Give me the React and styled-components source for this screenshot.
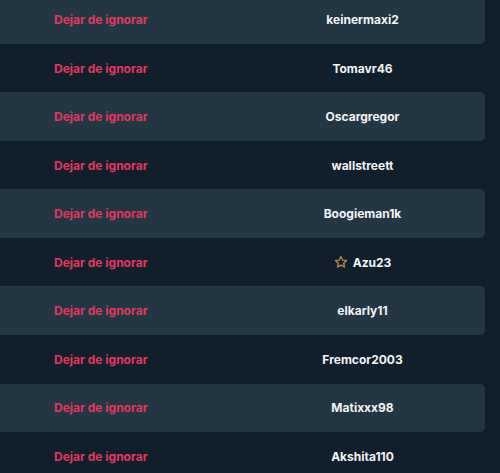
import styled, { createGlobalStyle } from 'styled-components';

const users = [
  { name: 'keinermaxi2' },
  { name: 'Tomavr46' },
  { name: 'Oscargregor' },
  { name: 'wallstreett' },
  { name: 'Boogieman1k' },
  { name: 'Azu23', star: true },
  { name: 'elkarly11' },
  { name: 'Fremcor2003' },
  { name: 'Matixxx98' },
  { name: 'Akshita110' },
];

const GlobalStyle = createGlobalStyle`
  html, body {
    margin: 0;
    padding: 0;
    background: #111f2d;
    overflow: hidden;
  }
  body {
    font-family: Inter, "Liberation Sans", sans-serif;
  }
`;

function Star() {
  return (
    <svg width="14" height="14" viewBox="0 0 24 24" fill="none" stroke="#b8914f" strokeWidth="2.2" strokeLinejoin="round">
      <path d="M12 2.5l2.9 6.1 6.6.8-4.9 4.6 1.3 6.6L12 17.3l-5.9 3.3 1.3-6.6-4.9-4.6 6.6-.8z" />
    </svg>
  );
}

function App() {
  return (
    <>
      <GlobalStyle />
      <List>
        {users.map((u, i) => (
          <Row key={u.name} $odd={i % 2 === 0}>
            <Action>Dejar de ignorar</Action>
            <User>
              {u.star && <Star />}
              {u.name}
            </User>
          </Row>
        ))}
      </List>
    </>
  );
}

const List = styled.div`
  display: flex;
  flex-direction: column;
  margin-top: -4.8px;
  margin-left: -10px;
  width: 495px;
`;

const Row = styled.div`
  display: grid;
  grid-template-columns: 250px 1fr;
  align-items: center;
  height: 48.55px;
  border-radius: 5px;
  background: ${(p) => (p.$odd ? '#233644' : 'transparent')};
`;

const Action = styled.span`
  padding-left: 64px;
  color: #e5365e;
  font-size: 12px;
  font-weight: 700;
  cursor: pointer;
`;

const User = styled.span`
  display: flex;
  justify-content: center;
  align-items: center;
  gap: 5px;
  color: #f2f4f5;
  font-size: 12px;
  font-weight: 700;
`;

export default App;
